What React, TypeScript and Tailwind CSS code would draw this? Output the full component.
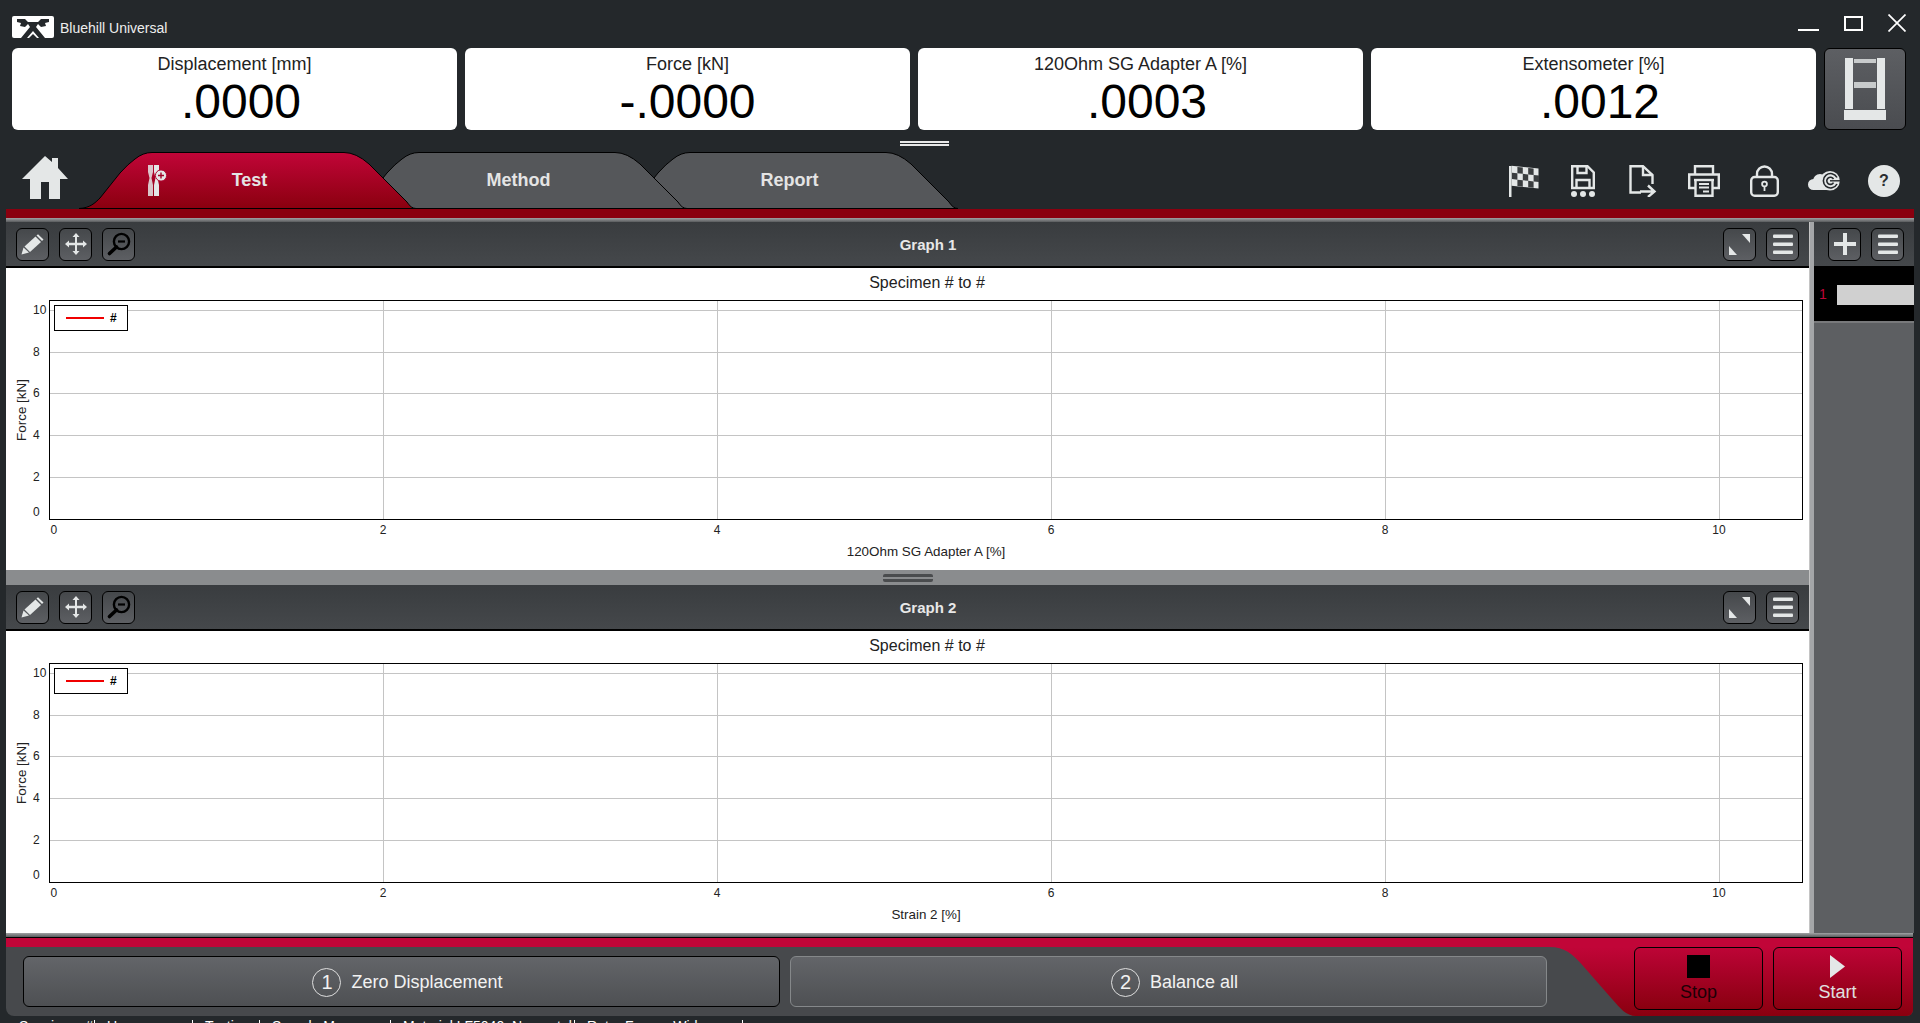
import type { ReactNode } from "react";

const LIGHT = "#e4e7e7";
const DARK = "#24282b";

function tabPath(w: number) {
  return `M0 56.5 C11 56 16 51 21 46 L41 21 Q49 12 56 7 Q64 0.5 73 0.5 H${w - 72} Q${w - 60} 0.5 ${w - 47} 12 L${w - 9} 50 Q${w - 5} 56.5 ${w} 56.5 Z`;
}

function Logo() {
  return (
    <svg width="42" height="22" viewBox="0 0 42 22">
      <rect width="42" height="22" rx="2" fill="#fff" />
      <path d="M5 3 H13 L16 6 H26 L29 3 H37 V6 L33 7 L34 10 L29 11 L26 8 L24 11 L33 22 H27 L21 15 L15 22 H9 L18 11 L16 8 L13 11 L8 10 L9 7 L5 6 Z" fill={DARK} />
      <path d="M17 22 L21 18 L25 22 Z" fill={DARK} />
    </svg>
  );
}

function MachineIcon() {
  return (
    <svg width="42" height="62" viewBox="0 0 42 62" fill={LIGHT}>
      <rect x="1" y="0" width="8" height="51" />
      <rect x="33" y="0" width="8" height="51" />
      <rect x="10" y="1" width="22" height="4" opacity="0.8" />
      <rect x="10" y="24" width="22" height="6" opacity="0.8" />
      <rect x="0" y="52" width="42" height="10" />
    </svg>
  );
}

function Home() {
  return (
    <svg width="46" height="43" viewBox="0 0 46 43" fill={LIGHT}>
      <path d="M23 0 L30 6 V2 H36 V12 L46 23 H38 V43 H27 V26 H19 V43 H8 V23 H0 Z" />
    </svg>
  );
}

function SpecimenIcon() {
  return (
    <svg width="20" height="31" viewBox="0 0 20 31">
      <path d="M1 0 H6 V7 L4.5 13 L6 20 V31 H1 V20 L2.5 13 L1 7 Z" fill={LIGHT} opacity="0.85" />
      <path d="M7 0 H12 V5 L10.5 13 L12 20 V31 H7 V20 L8.5 13 L7 7 Z" fill={LIGHT} />
      <circle cx="14" cy="10.5" r="5.6" fill={LIGHT} stroke="#b00530" strokeWidth="1" />
      <path d="M11 10.5 H17 M14 7.5 V13.5" stroke="#a00428" strokeWidth="1.4" />
    </svg>
  );
}

function Tab({ label, width, active, z, icon }: { label: string; width: number; active?: boolean; z: string; icon?: ReactNode }) {
  return (
    <div className={`relative h-[57px] shrink-0 -mr-[70px] flex items-center justify-center pl-[4px] ${z}`} style={{ width }}>
      <svg className="absolute inset-0" width={width} height="57" viewBox={`0 0 ${width} 57`}>
        <defs>
          <linearGradient id="tabRed" x1="0" y1="0" x2="0" y2="1">
            <stop offset="0" stopColor="#c10538" />
            <stop offset="1" stopColor="#8a000f" />
          </linearGradient>
        </defs>
        <path d={tabPath(width)} fill={active ? "url(#tabRed)" : "#55575a"} stroke="#000" strokeWidth="1" />
      </svg>
      {icon}
      <span className="relative text-[18px] font-bold text-[#e4e4e4]">{label}</span>
    </div>
  );
}

function Flag() {
  const cells = [0, 1, 2, 3, 4, 5, 6, 7, 8, 9, 10, 11, 12, 13, 14];
  return (
    <svg width="30" height="32" viewBox="0 0 30 32">
      <rect x="0" y="1" width="2.5" height="31" fill={LIGHT} />
      <g transform="skewY(6)">
        <rect x="2.5" y="0.5" width="27" height="20" fill={LIGHT} />
        {cells.map((i) =>
          (i % 5) % 2 === Math.floor(i / 5) % 2 ? null : (
            <rect key={i} x={3 + (i % 5) * 5.4} y={1 + Math.floor(i / 5) * 6.4} width="5.4" height="6.4" fill="#3a3d3f" />
          ),
        )}
      </g>
    </svg>
  );
}

function Save() {
  return (
    <svg width="24" height="32" viewBox="0 0 24 32" fill="none" stroke={LIGHT} strokeWidth="2.4">
      <path d="M1.2 1.2 H16.5 L22.8 7.5 V23 H1.2 Z" />
      <path d="M6.5 1.2 V8 H15.5 V1.2" />
      <path d="M5.5 23 V15 H18.5 V23" />
      <g fill={LIGHT} stroke="none">
        <circle cx="3" cy="29" r="3" />
        <circle cx="12" cy="29" r="3" />
        <circle cx="21" cy="29" r="3" />
      </g>
    </svg>
  );
}

function Export() {
  return (
    <svg width="28" height="32" viewBox="0 0 28 32" fill="none" stroke={LIGHT} strokeWidth="2.4">
      <path d="M12 27.5 H1.5 V1.2 H14 L23.5 10 V19" />
      <path d="M14 1.2 V10 H23.5" />
      <path d="M11 26.5 H25 M19 20.5 L25.5 26.5 L19 32" />
    </svg>
  );
}

function Printer() {
  return (
    <svg width="32" height="32" viewBox="0 0 32 32" fill="none" stroke={LIGHT} strokeWidth="2.4">
      <path d="M7 9 V1.2 H25 V9" />
      <path d="M7 23 H1.2 V9.5 H30.8 V23 H25" />
      <path d="M6 15 H26" />
      <path d="M7.5 15 V30.8 H24.5 V15" />
      <path d="M11 19 H21 M11 22.5 H21 M15 26.5 H21" strokeWidth="1.8" />
    </svg>
  );
}

function Lock() {
  return (
    <svg width="29" height="32" viewBox="0 0 29 32" fill="none" stroke={LIGHT} strokeWidth="2.4">
      <rect x="1.2" y="12" width="26.6" height="18.8" rx="3.5" />
      <path d="M7 12 V9 A7.5 7.5 0 0 1 22 9 V12" />
      <circle cx="14.5" cy="19" r="2.4" strokeWidth="1.8" />
      <path d="M14.5 21.4 V26" strokeWidth="1.8" />
    </svg>
  );
}

function Cloud() {
  return (
    <svg width="32" height="20" viewBox="0 0 32 20">
      <g fill={LIGHT}>
        <circle cx="5.5" cy="13.5" r="5.5" />
        <circle cx="12" cy="10" r="7" />
        <rect x="5" y="12" width="16" height="7" />
        <circle cx="22" cy="9.8" r="9.8" />
      </g>
      <path d="M29 6.5 A7.2 7.2 0 1 0 29 13" fill="none" stroke={DARK} strokeWidth="1.6" />
      <path d="M25.5 8 A3.6 3.6 0 1 0 25.5 11.6" fill="none" stroke={DARK} strokeWidth="1.6" />
      <path d="M22 9.8 H32" stroke={DARK} strokeWidth="1.4" />
    </svg>
  );
}

function ToolButton({ children }: { children: ReactNode }) {
  return (
    <div className="w-[33px] h-[33px] shrink-0 rounded-[6px] border border-black bg-gradient-to-b from-[#45484b] to-[#5d5f63] flex items-center justify-center">
      {children}
    </div>
  );
}

function Pencil() {
  return (
    <svg width="23" height="21" viewBox="0 0 23 21" fill={LIGHT}>
      <path d="M0.5 20.5 L2.5 13.5 L8 18.5 Z" />
      <path d="M3.5 12.5 L14.5 2.5 L20 8 L9 18 Z" />
      <path d="M15.5 1.5 L17 0.3 L22.5 5.5 L21 7 Z" />
    </svg>
  );
}

function MoveIcon() {
  return (
    <svg width="22" height="22" viewBox="0 0 22 22" fill={LIGHT}>
      <path d="M11 0 L14.5 4 H12 V9.8 H18 V7.5 L22 11 L18 14.5 V12.2 H12 V18 H14.5 L11 22 L7.5 18 H10 V12.2 H4 V14.5 L0 11 L4 7.5 V9.8 H10 V4 H7.5 Z" />
    </svg>
  );
}

function ZoomOut() {
  return (
    <svg width="24" height="24" viewBox="0 0 24 24" fill="none" stroke="#000">
      <circle cx="14.5" cy="9.5" r="7.6" strokeWidth="2.4" />
      <path d="M9.5 15 L2.5 21.5" strokeWidth="3.6" strokeLinecap="round" />
      <path d="M11 9.5 H18" strokeWidth="2.2" />
    </svg>
  );
}

function Expand() {
  return (
    <svg width="23" height="23" viewBox="0 0 23 23" fill={LIGHT}>
      <path d="M14 1 H22 V10 Z" />
      <path d="M1 13 L9 22 H1 Z" />
    </svg>
  );
}

function Menu() {
  return (
    <svg width="20" height="21" viewBox="0 0 20 21" fill={LIGHT}>
      <rect y="0.5" width="20" height="3.6" rx="1" />
      <rect y="8.5" width="20" height="3.6" rx="1" />
      <rect y="16.5" width="20" height="3.6" rx="1" />
    </svg>
  );
}

function Plus() {
  return (
    <svg width="22" height="22" viewBox="0 0 22 22" fill={LIGHT}>
      <rect x="9" y="0" width="4" height="22" />
      <rect x="0" y="9" width="22" height="4" />
    </svg>
  );
}

const gridX = [377, 711, 1045, 1379, 1713];
const gridY = [42, 84, 125, 167, 209];
const yTicks = [
  { t: "10", y: 42 },
  { t: "8", y: 84 },
  { t: "6", y: 125 },
  { t: "4", y: 167 },
  { t: "2", y: 209 },
  { t: "0", y: 244 },
];
const xTicks = ["2", "4", "6", "8", "10"];

function Chart({ xTitle }: { xTitle: string }) {
  return (
    <svg width="1803" height="302" viewBox="0 0 1803 302" className="block" fontFamily="'Liberation Sans', sans-serif">
      <text x="921" y="20" fontSize="16" textAnchor="middle" fill="#222">Specimen # to #</text>
      {gridY.map((y) => (
        <line key={y} x1="43" x2="1797" y1={y + 0.5} y2={y + 0.5} stroke="#c4c4c4" />
      ))}
      {gridX.map((x) => (
        <line key={x} x1={x + 0.5} x2={x + 0.5} y1="32" y2="251" stroke="#c4c4c4" />
      ))}
      <rect x="43.5" y="32.5" width="1753" height="219" fill="none" stroke="#000" />
      <rect x="48.5" y="37.5" width="73" height="25" fill="#fff" stroke="#000" />
      <line x1="60" x2="98" y1="50" y2="50" stroke="#f00000" strokeWidth="2" />
      <text x="104" y="54" fontSize="12" fontWeight="700" fill="#000">#</text>
      {yTicks.map((k) => (
        <text key={k.t} x="27" y={k.y + 4} fontSize="12" fill="#222">{k.t}</text>
      ))}
      <text x="44.5" y="266" fontSize="12" fill="#222">0</text>
      {xTicks.map((t, i) => (
        <text key={t} x={gridX[i]} y="266" fontSize="12" textAnchor="middle" fill="#222">{t}</text>
      ))}
      <text x="920" y="288" fontSize="13.4" textAnchor="middle" fill="#222">{xTitle}</text>
      <text transform="translate(20 142) rotate(-90)" fontSize="13.4" textAnchor="middle" fill="#222">Force [kN]</text>
    </svg>
  );
}

function Graph({ title, xTitle }: { title: string; xTitle: string }) {
  return (
    <div className="flex flex-col">
      <div className="h-[44px] pl-[10px] pr-[10px] flex items-center justify-between bg-gradient-to-b from-[#393c3f] to-[#45484b]">
        <div className="flex gap-[10px]">
          <ToolButton><Pencil /></ToolButton>
          <ToolButton><MoveIcon /></ToolButton>
          <ToolButton><ZoomOut /></ToolButton>
        </div>
        <span className="text-[15px] font-bold text-[#e8e8e8] mt-[2px] -ml-[2px]">{title}</span>
        <div className="flex gap-[10px]">
          <ToolButton><Expand /></ToolButton>
          <ToolButton><Menu /></ToolButton>
        </div>
      </div>
      <div className="h-[2px] bg-black" />
      <div className="h-[302px] bg-white">
        <Chart xTitle={xTitle} />
      </div>
    </div>
  );
}

function Card({ label, value, signed }: { label: string; value: string; signed?: boolean }) {
  return (
    <div className="w-[445px] h-[82px] bg-white rounded-[6px] flex flex-col items-center text-black">
      <div className="text-[18px] leading-[20px] mt-[6px] text-[#222]">{label}</div>
      <div className={`text-[48px] leading-[50px] mt-[3px] ${signed ? "" : "pl-[13px]"}`}>{value}</div>
    </div>
  );
}

function PromptButton({ num, label, dim }: { num: string; label: string; dim?: boolean }) {
  return (
    <div
      className={`w-[757px] h-[51px] pl-[12px] pt-[1px] rounded-[6px] border bg-gradient-to-b from-[#636569] to-[#4e5053] flex items-center justify-center gap-[10px] text-[#f2f2f2] ${dim ? "border-[#85888a]" : "border-black"}`}
    >
      <span className="w-[29px] h-[29px] rounded-full border border-[#dedede] flex items-center justify-center text-[20px]">{num}</span>
      <span className="text-[18px]">{label}</span>
    </div>
  );
}

const statusItems = [
  { text: "Specimen #", w: "w-[95px] pl-[19px]" },
  { text: "Username", w: "w-[98px] pl-[12px]" },
  { text: "Testing", w: "w-[67px] pl-[12px]" },
  { text: "Sample Manager", w: "w-[131px] pl-[12px]" },
  { text: "Material LF5040_Nonmetal", w: "w-[184px] pl-[12px]" },
  { text: "Rotor Frame: Wide", w: "w-[168px] pl-[12px]" },
];

export default function App() {
  return (
    <div className="w-[1920px] h-[1023px] overflow-hidden bg-[#24282b] flex flex-col font-['Liberation_Sans',sans-serif]">
      {/* title bar */}
      <div className="h-[48px] shrink-0 flex items-start justify-between pl-[12px] pr-[14px] pt-[14px]">
        <div className="flex items-center gap-[6px]">
          <Logo />
          <span className="text-[14px] text-[#eeeeee] pt-[4px]">Bluehill Universal</span>
        </div>
        <div className="flex items-start gap-[25px]">
          <div className="w-[21px] h-[2px] mt-[15px] bg-white" />
          <div className="w-[19px] h-[15px] mt-[2px] border-2 border-white" />
          <svg width="18" height="18" viewBox="0 0 18 18" stroke="#fff" strokeWidth="1.7" className="mt-0">
            <path d="M0.5 0.5 L17.5 17.5 M17.5 0.5 L0.5 17.5" />
          </svg>
        </div>
      </div>

      {/* live readouts */}
      <div className="h-[82px] shrink-0 flex gap-[8px] pl-[12px]">
        <Card label="Displacement [mm]" value=".0000" />
        <Card label="Force [kN]" value="-.0000" signed />
        <Card label="120Ohm SG Adapter A [%]" value=".0003" />
        <Card label="Extensometer [%]" value=".0012" />
        <div className="w-[82px] h-[82px] rounded-[6px] border border-black bg-gradient-to-b from-[#5d5f63] to-[#4a4c50] flex items-center justify-center">
          <MachineIcon />
        </div>
      </div>

      {/* drag handle */}
      <div className="h-[22px] shrink-0 pl-[900px] pt-[11px]">
        <div className="w-[49px] h-[5px] border-y-[2px] border-[#e8e8e8]" />
      </div>

      {/* tab row */}
      <div className="h-[57px] shrink-0 flex items-start">
        <div className="ml-[22px] mt-[4px] mr-[11px]">
          <Home />
        </div>
        <Tab
          label="Test"
          width={337}
          active
          z="z-30"
          icon={
            <div className="absolute left-[68px] top-[13px]">
              <SpecimenIcon />
            </div>
          }
        />
        <Tab label="Method" width={341} z="z-20" />
        <Tab label="Report" width={341} z="z-10" />
        <div className="ml-auto flex items-center gap-0 h-[57px] pr-[20px]">
          <div className="mr-[32px]"><Flag /></div>
          <div className="mr-[34px]"><Save /></div>
          <div className="mr-[31px]"><Export /></div>
          <div className="mr-[30px]"><Printer /></div>
          <div className="mr-[29px]"><Lock /></div>
          <div className="mr-[28px]"><Cloud /></div>
          <div className="w-[32px] h-[32px] rounded-full bg-[#e4e7e7] flex items-center justify-center text-[16px] font-bold text-[#2a2d30]">?</div>
        </div>
      </div>

      {/* work area */}
      <div className="ml-[6px] w-[1908px] h-[13px] shrink-0 flex flex-col">
        <div className="h-[9px] bg-[#8a000f]" />
        <div className="h-[4px] bg-gradient-to-b from-[#a0a2a4] to-[#5a5c5e]" />
      </div>
      <div className="ml-[6px] w-[1908px] h-[711px] shrink-0 flex">
        <div className="w-[1803px] flex flex-col">
          <Graph title="Graph 1" xTitle="120Ohm SG Adapter A [%]" />
          <div className="h-[15px] bg-[#8a8c8e] flex items-center justify-center">
            <div className="w-[50px] h-[8px] border-y-[3px] border-[#4a4c4e] rounded-[2px]" />
          </div>
          <Graph title="Graph 2" xTitle="Strain 2 [%]" />
        </div>
        <div className="w-[5px] bg-[#a4a6a8] border-l-[1px] border-[#c4c4c4]" />
        <div className="w-[100px] flex flex-col bg-[#5d5f62]">
          <div className="h-[44px] pl-[14px] flex items-center gap-[10px] bg-gradient-to-b from-[#393c3f] to-[#45484b]">
            <ToolButton><Plus /></ToolButton>
            <ToolButton><Menu /></ToolButton>
          </div>
          <div className="h-[55px] bg-black flex items-center pl-[5px] border-t-[2px] border-black">
            <span className="w-[18px] text-[14px] font-medium text-[#c10538]">1</span>
            <div className="flex-1 h-[20px] bg-[#d0d0d0]" />
          </div>
          <div className="h-[2px] bg-[#78797b]" />
        </div>
      </div>

      {/* bottom prompts */}
      <div className="ml-[6px] w-[1907px] h-[83px] shrink-0 flex flex-col">
        <div className="h-[5px] bg-gradient-to-b from-[#a0a2a4] to-[#5a5c5e] border-b border-black" />
        <div className="h-[9px] bg-[#c10538]" />
        <div className="relative h-[69px] bg-[#47494c] rounded-bl-[8px] rounded-br-[6px] overflow-hidden flex items-start pl-[17px]">
          <svg className="absolute top-0 right-0" width="363" height="69" viewBox="0 0 363 69">
            <defs>
              <linearGradient id="bottomRed" x1="0" y1="0" x2="0" y2="1">
                <stop offset="0" stopColor="#c10538" />
                <stop offset="1" stopColor="#8a000f" />
              </linearGradient>
            </defs>
            <path d="M0 0 C14 0 22 6 34 20 L62 52 C70 61 76 69 86 69 H363 V0 Z" fill="url(#bottomRed)" />
          </svg>
          <div className="relative mt-[9px] flex gap-[10px]">
            <PromptButton num="1" label="Zero Displacement" />
            <PromptButton num="2" label="Balance all" dim />
          </div>
          <div className="relative ml-[87px] flex gap-[10px]">
            <div className="w-[129px] h-[63px] rounded-[6px] border border-black bg-gradient-to-b from-[#bd0436] to-[#8a000f] flex flex-col items-center pt-[7px] text-[#1c0006]">
              <div className="w-[23px] h-[23px] bg-black" />
              <span className="text-[18px] leading-[20px] mt-[4px]">Stop</span>
            </div>
            <div className="w-[129px] h-[63px] rounded-[6px] border border-black bg-gradient-to-b from-[#bd0436] to-[#8a000f] flex flex-col items-center pt-[7px] text-[#e0e0e0]">
              <svg width="15" height="23" viewBox="0 0 15 23" fill={LIGHT}>
                <path d="M0 0 L15 11.5 L0 23 Z" />
              </svg>
              <span className="text-[18px] leading-[20px] mt-[4px]">Start</span>
            </div>
          </div>
        </div>
      </div>

      {/* status strip, mostly cut off by the window edge */}
      <div className="flex h-[12px] mt-[4px] shrink-0 text-[14px] leading-[12px] text-white">
        {statusItems.map((s) => (
          <div key={s.text} className={`${s.w} shrink-0 whitespace-nowrap border-r border-white`}>
            {s.text}
          </div>
        ))}
      </div>
    </div>
  );
}
